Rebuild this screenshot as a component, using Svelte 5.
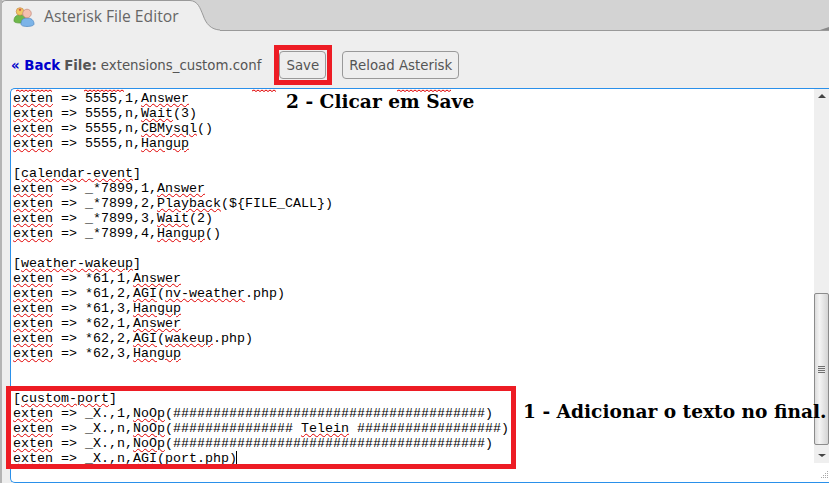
<script>
    const source = [
        "~exten~ => 5555,1,~Answer~",
        "~exten~ => 5555,n,~Wait~(3)",
        "~exten~ => 5555,n,~CBMysql~()",
        "~exten~ => 5555,n,~Hangup~",
        "",
        "[~calendar-event~]",
        "~exten~ => _*7899,1,~Answer~",
        "~exten~ => _*7899,2,~Playback~(${FILE_CALL})",
        "~exten~ => _*7899,3,~Wait~(2)",
        "~exten~ => _*7899,4,~Hangup~()",
        "",
        "[~weather-wakeup~]",
        "~exten~ => *61,1,~Answer~",
        "~exten~ => *61,2,~AGI~(~nv-weather~.php)",
        "~exten~ => *61,3,~Hangup~",
        "~exten~ => *62,1,~Answer~",
        "~exten~ => *62,2,~AGI~(~wakeup~.php)",
        "~exten~ => *62,3,~Hangup~",
        "",
        "",
        "[~custom-port~]",
        "~exten~ => _X.,1,~NoOp~(#######################################)",
        "~exten~ => _X.,n,~NoOp~(############### ~Telein~ ##################)",
        "~exten~ => _X.,n,~NoOp~(#######################################)",
        "~exten~ => _X.,n,~AGI~(port.php)"
    ];

    // words between ~ get the spellcheck squiggle
    const lines = source.map((l) => l.split("~"));

    // squiggles left over from the line scrolled out above the first one
    function squiggle(from, to) {
        let d = `M${from} 2`;
        for (let x = from + 2, up = true; x <= to; x += 2, up = !up) {
            d += `L${x} ${up ? 1 : 2.5}`;
        }
        return d;
    }
    const leftovers = [[5, 41], [73, 113], [241, 265], [386, 441]].map(([a, b]) => squiggle(a, b));
</script>

<div class="page">
    <div class="tabbar">
        <div class="tab">
            <svg class="users" width="22" height="22" viewBox="0 0 22 22">
                <path d="M1 16c0-4 2-6 6-6s6 2 6 6c0 1-2 2-6 2s-6-1-6-2z" fill="#6fb84a" stroke="#4f9434" stroke-width=".7" />
                <circle cx="7" cy="6.5" r="3.8" fill="#f0c860" stroke="#c98a50" stroke-width=".7" />
                <path d="M7 3.5l1.4 1.2-1.4 1.6-1.4-1.6z" fill="#d8504a" />
                <path d="M8 19c0-4 2-6 6-6s7 2 7 6c0 1.500-3 2.500-7 2.500s-6-1-6-2.500z" fill="#7cb4e8" stroke="#4f86c0" stroke-width=".7" />
                <circle cx="14" cy="8.500" r="4.300" fill="#f4c0b0" stroke="#c08878" stroke-width=".7" />
            </svg>
            <span class="title">Asterisk File Editor</span>
        </div>
        <svg class="curve" width="30" height="31" viewBox="0 0 30 31">
            <path d="M0 0C8 1 10 8 13 15C16 24 21 29.500 30 30L30 31L0 31Z" fill="#eeeeee" />
            <path d="M0 .5C8 1 10 8 13 15C16 24 21 29.500 30 30" fill="none" stroke="#999999" />
        </svg>
        <svg class="next-tab" width="9" height="3" viewBox="0 0 9 3">
            <path d="M0 3L9 0V3Z" fill="#8a8a8a" />
        </svg>
    </div>

    <div class="toolbar">
        <a class="back" href="#back">« Back</a>
        <b class="label">File:</b>
        <span class="filename">extensions_custom.conf</span>
        <button class="save">Save</button>
        <button class="reload">Reload Asterisk</button>
    </div>

    <div class="editor">
        <div class="code">
            <svg class="leftover" width="460" height="3" viewBox="0 0 460 3">
                {#each leftovers as d}
                    <path {d} fill="none" stroke="#e00000" />
                {/each}
            </svg>
            {#each lines as parts}
                <div class="line">{#each parts as part, i}{#if i % 2}<span class="wave">{part}</span>{:else}{part}{/if}{/each}</div>
            {/each}
        </div>
        <div class="side">
            <div class="scrollbar">
                <div class="arrow up"></div>
                <div class="thumb"><span class="grip"></span></div>
                <div class="arrow down"></div>
            </div>
            <svg class="resize" width="10" height="10" viewBox="0 0 10 10">
                <path d="M8 1h1v1H8zM6 3h1v1H6zM8 3h1v1H8zM4 5h1v1H4zM6 5h1v1H6zM8 5h1v1H8zM2 7h1v1H2zM4 7h1v1H4zM6 7h1v1H6zM8 7h1v1H8z" fill="#a8a8a8" />
            </svg>
        </div>
    </div>

    <div class="mark mark-save"></div>
    <div class="mark mark-code"></div>
    <div class="note note-save">2 - Clicar em Save</div>
    <div class="note note-code">1 - Adicionar o texto no final.</div>
    <div class="caret"></div>
</div>

<style>
    :global(body) {
        margin: 0;
        background: #eeeeee;
    }

    .page {
        position: relative;
        width: 829px;
        height: 483px;
        overflow: hidden;
        box-sizing: border-box;
        border-left: 2px solid #b4b4b4;
        font-family: "DejaVu Sans", sans-serif;
        color: #555555;
    }

    .tabbar {
        display: flex;
        height: 30px;
        margin-left: -2px;
        background: #d3d3d3;
        border-bottom: 1px solid #999999;
    }

    .tab {
        display: flex;
        align-items: center;
        gap: 9px;
        width: 190px;
        height: 31px;
        box-sizing: border-box;
        padding-left: 12px;
        background: #eeeeee;
        border-top: 1px solid #999999;
        border-left: 1px solid #999999;
        border-top-left-radius: 6px;
    }

    .users {
        flex: none;
    }

    .title {
        font-family: "Open Sans", sans-serif;
        font-size: 15.700px;
        color: #666666;
        white-space: nowrap;
    }

    .curve {
        flex: none;
    }

    .next-tab {
        flex: none;
        align-self: flex-end;
        margin-left: auto;
    }

    .toolbar {
        display: flex;
        align-items: center;
        height: 57px;
        box-sizing: border-box;
        padding: 11px 0 0 9px;
        font-size: 13.333px;
        white-space: nowrap;
    }

    .back {
        font-weight: bold;
        color: #0000cc;
        text-decoration: none;
    }

    .label {
        margin-left: 4px;
    }

    .filename {
        margin-left: 4px;
    }

    button {
        height: 28px;
        box-sizing: border-box;
        padding: 0;
        background: #eeeeee;
        border: 1px solid #999999;
        border-radius: 4px;
        font: inherit;
        color: #555555;
    }

    .save {
        width: 47px;
        margin-left: 18px;
    }

    .reload {
        width: 117px;
        margin-left: 16px;
    }

    .editor {
        display: flex;
        height: 393px;
        margin-left: 8px;
        background: #ffffff;
        border-top: 1px solid #2a90ea;
        border-bottom: 1px solid #2a90ea;
        border-left: 1px solid #2a90ea;
        border-top-left-radius: 5px;
        border-bottom-left-radius: 5px;
    }

    .code {
        flex: 1;
        min-width: 0;
        overflow: hidden;
        padding-left: 2px;
        font-family: "Liberation Mono", monospace;
        font-size: 13.333px;
        line-height: 15px;
        color: #000000;
    }

    .leftover {
        display: block;
        margin: 0 0 -1.500px -2px;
    }

    .line {
        height: 15px;
        white-space: pre;
    }

    .wave {
        text-decoration: underline wavy #e00000 1px;
        text-underline-offset: 1px;
    }

    .side {
        display: flex;
        flex-direction: column;
        flex: none;
        width: 15px;
    }

    .scrollbar {
        display: flex;
        flex-direction: column;
        height: 374px;
        background: #efefef;
    }

    .arrow {
        flex: none;
        width: 0;
        height: 0;
        margin: 0 auto;
        border-left: 4px solid transparent;
        border-right: 4px solid transparent;
    }

    .up {
        margin-top: 5px;
        border-bottom: 4px solid #444444;
    }

    .down {
        margin-top: 9px;
        border-top: 3px solid #444444;
    }

    .thumb {
        display: flex;
        align-items: center;
        justify-content: center;
        height: 152px;
        margin-top: 195px;
        box-sizing: border-box;
        background: linear-gradient(to right, #dcdcdc, #f4f4f4 35%, #d4d4d4);
        border: 1px solid #8c8c8c;
        border-radius: 2px;
    }

    .grip {
        width: 7px;
        height: 7px;
        background: repeating-linear-gradient(to bottom, #707070 0 1px, #e8e8e8 1px 2px);
    }

    .resize {
        margin: 7px 0 0 5px;
    }

    .mark {
        position: absolute;
        box-sizing: border-box;
        border: 5px solid #ed1c24;
    }

    .mark-save {
        left: 272px;
        top: 45px;
        width: 58px;
        height: 40px;
    }

    .mark-code {
        left: 4px;
        top: 386px;
        width: 510px;
        height: 83px;
    }

    .note {
        position: absolute;
        font-family: "DejaVu Serif", serif;
        font-weight: bold;
        font-size: 18.600px;
        line-height: 22px;
        color: #000000;
        white-space: nowrap;
    }

    .note-save {
        left: 284px;
        top: 91px;
    }

    .note-code {
        left: 521px;
        top: 401px;
    }

    .caret {
        position: absolute;
        left: 234px;
        top: 451px;
        width: 1px;
        height: 13px;
        background: #000000;
    }
</style>
